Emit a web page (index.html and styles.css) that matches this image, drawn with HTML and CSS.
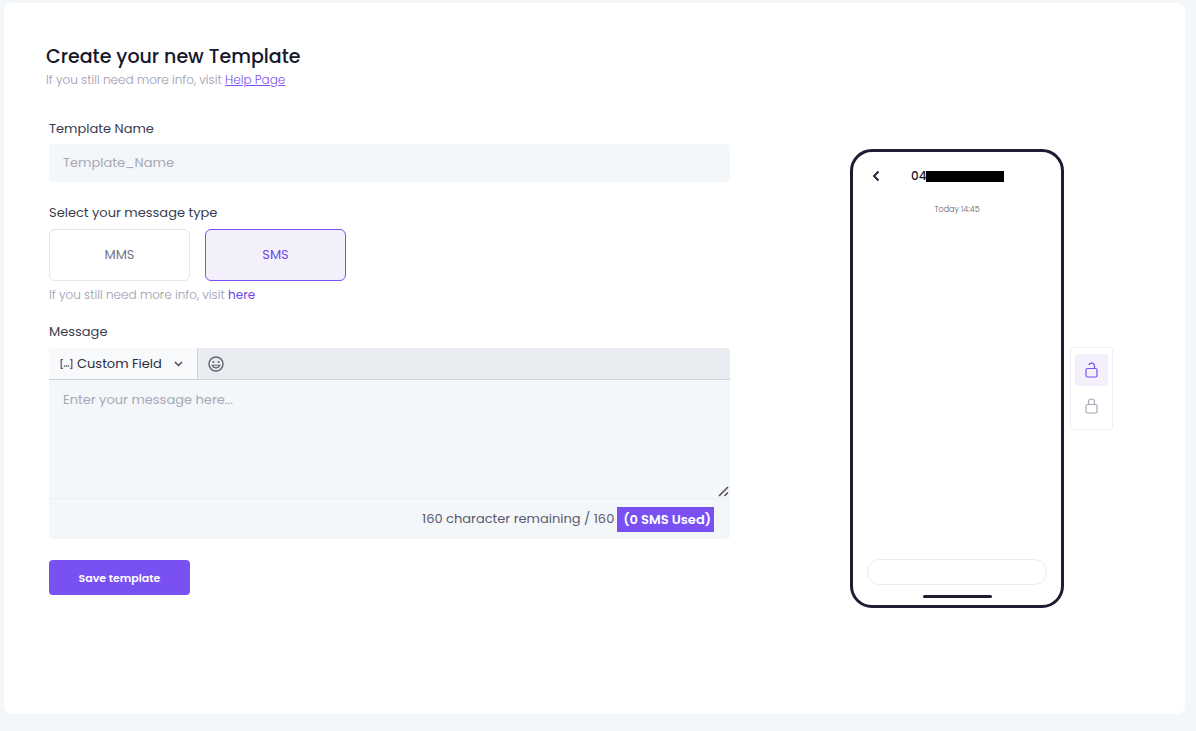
FILE: index.html
```html
<!DOCTYPE html>
<html lang="en">
<head>
  <meta charset="UTF-8">
  <meta name="viewport" content="width=device-width, initial-scale=1">
  <title>Create Template</title>
  <link rel="stylesheet" href="styles.css">
</head>
<body>

  <main class="card">
    <form class="template-form">
      <header class="form-header">
        <h1>Create your new Template</h1>
        <p class="hint">If you still need more info, visit <a href="#" class="help-link">Help Page</a></p>
      </header>

      <div class="form-group">
        <label class="field-label" for="templateName">Template Name</label>
        <input type="text" id="templateName" class="text-input" placeholder="Template_Name">
      </div>

      <div class="form-group type-group">
        <span class="field-label" id="typeLabel">Select your message type</span>
        <div class="type-options" role="group" aria-labelledby="typeLabel">
          <button type="button" class="type-btn">MMS</button>
          <button type="button" class="type-btn active">SMS</button>
        </div>
        <p class="hint">If you still need more info, visit <a href="#" class="here-link">here</a></p>
      </div>

      <div class="form-group">
        <label class="field-label" for="message">Message</label>
        <div class="editor">
          <div class="toolbar">
            <button type="button" class="custom-field">
              <svg width="13" height="12" viewBox="0 0 13 12" fill="none" stroke="#5f5f70" stroke-width="1.3">
                <path d="M3 1.7H1.2v8.6H3M10 1.7h1.8v8.6H10"/>
                <path d="M3.8 8h1.4M5.8 8h1.4M7.8 8h1.4"/>
              </svg>
              <span>Custom Field</span>
              <svg class="chevron" width="9" height="6" viewBox="0 0 9 6" fill="none" stroke="#4a4a5c" stroke-width="1.5">
                <path d="M1 1l3.5 3.5L8 1"/>
              </svg>
            </button>
            <button type="button" class="emoji-btn" aria-label="Insert emoji">
              <svg width="16" height="16" viewBox="0 0 16 16" fill="none" stroke="#62626e" stroke-width="1.4">
                <circle cx="8" cy="8" r="7"/>
                <circle cx="5.4" cy="6" r="1" fill="#62626e" stroke="none"/>
                <circle cx="10.6" cy="6" r="1" fill="#62626e" stroke="none"/>
                <path d="M4.2 9.2h7.6c-.6 1.7-1.9 2.7-3.8 2.7s-3.2-1-3.8-2.7z" stroke-width="1.1"/>
              </svg>
            </button>
          </div>
          <div class="message-box">
            <textarea id="message" placeholder="Enter your message here..."></textarea>
            <svg class="resize-icon" width="11" height="11" viewBox="0 0 11 11" stroke="#4b4b50" stroke-width="1.5">
              <path d="M1 10l9-9M6.5 10L10 6.5"/>
            </svg>
          </div>
          <div class="counter">
            <span>160 character remaining / 160</span>
            <strong class="used">(0 SMS Used)</strong>
          </div>
        </div>
      </div>

      <button type="submit" class="save-btn">Save template</button>
    </form>

    <section class="preview">
      <div class="phone">
        <div class="phone-header">
          <button type="button" class="back-btn" aria-label="Back">
            <svg width="8" height="12" viewBox="0 0 8 12" fill="none" stroke="#1c1d33" stroke-width="1.8">
              <path d="M6.5 1.5L2 6l4.5 4.5"/>
            </svg>
          </button>
          <span class="phone-number">04<span class="redacted"></span></span>
        </div>
        <p class="phone-time">Today 14:45</p>
        <div class="phone-input"></div>
        <div class="home-bar"></div>
      </div>
      <div class="lock-tools">
        <button type="button" class="lock-btn active" aria-label="Unlock">
          <svg width="13" height="18" viewBox="0 0 13 18" fill="none" stroke="currentColor" stroke-width="1.2">
            <rect x="1" y="7.5" width="11" height="8.5" rx="1.5"/>
            <path d="M9.5 7.5V5a3 3 0 0 0-5.8-1"/>
          </svg>
        </button>
        <button type="button" class="lock-btn" aria-label="Lock">
          <svg width="13" height="18" viewBox="0 0 13 18" fill="none" stroke="currentColor" stroke-width="1.2">
            <rect x="1" y="7.5" width="11" height="8.5" rx="1.5"/>
            <path d="M3.5 7.5V5a3 3 0 0 1 6 0v2.5"/>
          </svg>
        </button>
      </div>
    </section>
  </main>

</body>
</html>
```
FILE: styles.css
```css
* {
  box-sizing: border-box;
}

body {
  margin: 0;
  padding: 3px 11px 17px 4px;
  font-family: Poppins, Inter, sans-serif;
  font-size: 13px;
  line-height: 20px;
  color: #3b3b50;
  background: #f4f7fa;
}

h1, p {
  margin: 0;
}

button, input, textarea {
  font-family: inherit;
  font-size: inherit;
  line-height: inherit;
  border: none;
  margin: 0;
}

button {
  padding: 0;
  cursor: pointer;
}

svg {
  display: block;
}

.card {
  display: grid;
  grid-template-columns: minmax(0, 1fr) 455px;
  min-height: calc(100vh - 20px);
  background: #fff;
  border-radius: 8px;
}

/* form */
.template-form {
  padding: 42px 0 40px 45px;
}

.form-header {
  margin: 0 0 29px -3px;
}

.form-header h1 {
  margin-bottom: 1px;
  font-size: 19px;
  font-weight: 500;
  line-height: 24px;
  color: #16172b;
}

.hint {
  font-size: 12px;
  font-weight: 300;
  color: #9a9cae;
}

.help-link {
  color: #7950f2;
}

.here-link {
  color: #7048e8;
  font-weight: 400;
  text-decoration: none;
}

.form-group {
  margin-bottom: 21px;
}

.field-label {
  display: block;
  margin-bottom: 5px;
}

.text-input {
  display: block;
  width: 100%;
  height: 38px;
  padding: 0 14px;
  background: #f4f7fa;
  border-radius: 4px;
}

::placeholder {
  color: #a6a8b7;
  opacity: 1;
}

.type-group {
  margin-bottom: 17px;
}

.type-options {
  display: flex;
  gap: 15px;
  padding: 1px 0 4px;
}

.type-btn {
  width: 141px;
  height: 52px;
  border: 1px solid #e4e3ef;
  border-radius: 6px;
  background: #fff;
  color: #74748a;
}

.type-btn.active {
  border-color: #7950f2;
  background: #f3effb;
  color: #7048e8;
}

.editor {
  margin-top: 6px;
  border-radius: 4px;
  background: #f4f7fa;
  overflow: hidden;
}

.toolbar {
  display: flex;
  height: 32px;
  background: #e9ecf1;
  border-bottom: 1px solid #d0d3db;
}

.custom-field {
  display: flex;
  align-items: center;
  gap: 4px;
  width: 149px;
  padding: 0 14px 0 11px;
  border-right: 1px solid #d0d3db;
  background: #f7f9fb;
  color: #2d2d42;
}

.chevron {
  margin-left: auto;
}

.emoji-btn {
  padding: 0 10px;
  background: none;
}

.message-box {
  position: relative;
  border-bottom: 1px solid #ebeef2;
}

.message-box textarea {
  display: block;
  width: 100%;
  height: 118px;
  padding: 10px 14px;
  background: #f4f7fa;
  resize: none;
}

.resize-icon {
  position: absolute;
  right: 1px;
  bottom: 1px;
}

.counter {
  display: flex;
  align-items: center;
  justify-content: flex-end;
  gap: 3px;
  height: 40px;
  padding-right: 16px;
  color: #5a5a70;
}

.used {
  padding: 3px 3px 2px 6px;
  background: #7950f2;
  color: #fff;
  font-weight: 600;
}

.save-btn {
  display: block;
  width: 141px;
  height: 35px;
  border-radius: 4px;
  background: #7950f2;
  color: #fff;
  font-size: 11px;
  font-weight: 600;
}

/* phone preview */
.preview {
  display: grid;
  grid-template-columns: 1fr 214px 1fr;
  column-gap: 6px;
  align-items: start;
  padding: 146px 1px 40px 0;
}

.phone {
  grid-column: 2;
  display: flex;
  flex-direction: column;
  align-items: center;
  height: 459px;
  padding: 14px 14px 7px;
  border: 3px solid #1c1d33;
  border-radius: 22px;
}

.phone-header {
  display: flex;
  align-items: center;
  align-self: stretch;
  padding-left: 5px;
}

.back-btn {
  background: none;
}

.phone-number {
  display: flex;
  align-items: center;
  margin-left: 31px;
  font-size: 12px;
  font-weight: 500;
  color: #16172b;
}

.redacted {
  width: 78px;
  height: 11px;
  background: #000;
}

.phone-time {
  margin-top: 14px;
  font-size: 8px;
  font-weight: 300;
  color: #5f5f70;
}

.phone-input {
  width: 100%;
  height: 26px;
  margin-top: auto;
  border: 1px solid #ececee;
  border-radius: 13px;
}

.home-bar {
  width: 69px;
  height: 3px;
  margin-top: 10px;
  border-radius: 2px;
  background: #1c1d33;
}

.lock-tools {
  display: flex;
  flex-direction: column;
  justify-self: start;
  gap: 4px;
  margin-top: 198px;
  padding: 6px 4px 7px;
  border: 1px solid #f0f0f4;
  border-radius: 3px;
}

.lock-btn {
  display: flex;
  align-items: center;
  justify-content: center;
  width: 33px;
  height: 32px;
  border-radius: 3px;
  background: none;
  color: #a8a8b4;
}

.lock-btn.active {
  background: #f3effb;
  color: #7950f2;
}
```
